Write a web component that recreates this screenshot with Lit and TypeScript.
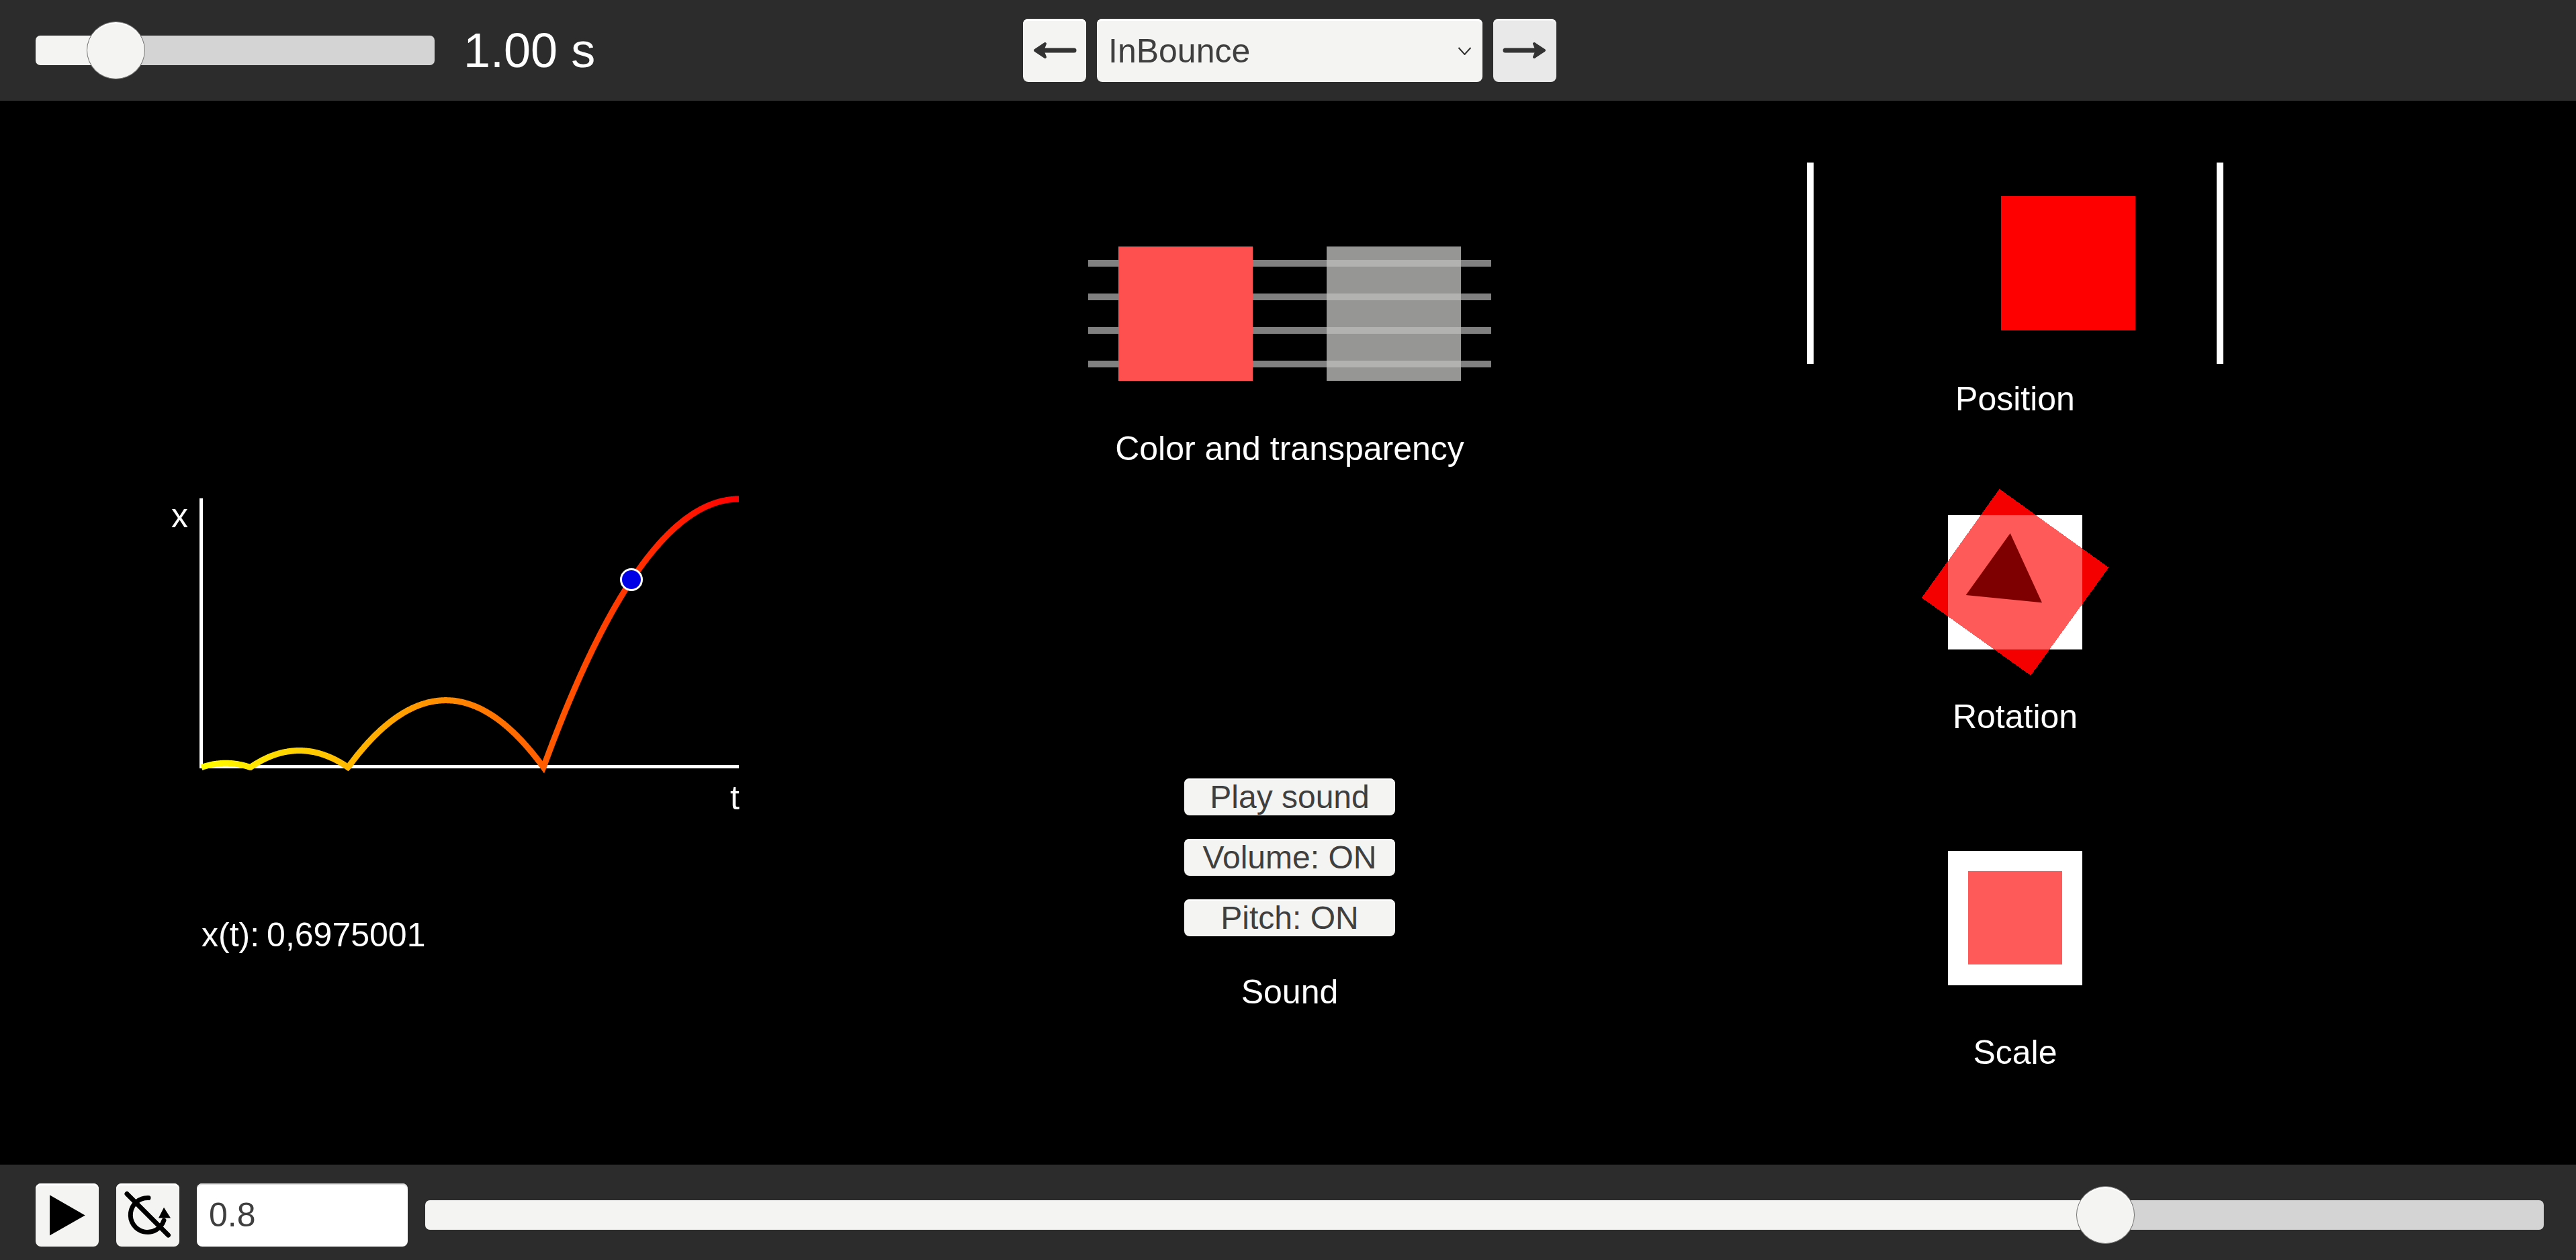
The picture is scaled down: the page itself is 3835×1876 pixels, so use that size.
import { LitElement, html, css, svg } from "lit";
import { customElement } from "lit/decorators.js";

const outBounce = (t: number) => {
  const n = 7.5625, d = 2.75;
  if (t < 1 / d) return n * t * t;
  if (t < 2 / d) return n * (t -= 1.5 / d) * t + 0.75;
  if (t < 2.5 / d) return n * (t -= 2.25 / d) * t + 0.9375;
  return n * (t -= 2.625 / d) * t + 0.984375;
};
const inBounce = (t: number) => 1 - outBounce(1 - t);

// Chart coordinates are local to the 900x530 svg placed at (220, 700).
const X0 = 80, W = 800, Y0 = 442.5, H = 399.5;
const curve = Array.from({ length: 801 }, (_, i) => {
  const t = i / 800;
  return `${(X0 + t * W).toFixed(1)},${(Y0 - inBounce(t) * H).toFixed(1)}`;
}).join(" ");

const arrow = (flip: boolean) => html`<svg class="icon" viewBox="0 0 94 94">
  <g transform=${flip ? "translate(94 0) scale(-1 1)" : ""} fill="#333" stroke="#333" stroke-linecap="round" stroke-linejoin="round">
    <path stroke-width="4" d="M33 37 L18 47 L33 57 L29 47 Z" />
    <path stroke-width="7" d="M29 47 H76" />
  </g>
</svg>`;

@customElement("app-root")
export class AppRoot extends LitElement {
  static styles = css`
    :host {
      display: flex;
      flex-direction: column;
      width: 3835px;
      height: 1876px;
      background: #000;
      color: #fff;
      font-family: "Liberation Sans", Arial, sans-serif;
      font-size: 50px;
      overflow: hidden;
    }
    .top {
      height: 150px;
      flex: none;
      background: #2c2c2c;
      display: flex;
      align-items: center;
      padding-left: 53px;
    }
    .duration {
      width: 1470px;
      display: flex;
      align-items: center;
      gap: 43px;
    }
    .time { font-size: 72px; line-height: 80px; }
    .nav { display: flex; gap: 16px; align-items: center; }
    .bottom {
      height: 142px;
      flex: none;
      background: #2c2c2c;
      display: flex;
      align-items: center;
      gap: 26px;
      padding: 8px 48px 0 53px;
      box-sizing: border-box;
      margin-top: auto;
    }
    input[type="range"] {
      -webkit-appearance: none;
      appearance: none;
      display: block;
      height: 44px;
      margin: 0;
      padding: 0;
      border-radius: 7px;
      outline: none;
      background: linear-gradient(to right, #f4f4f2 var(--fill), #d4d4d4 var(--fill));
    }
    input[type="range"]::-webkit-slider-thumb {
      -webkit-appearance: none;
      width: 87px;
      height: 86px;
      box-sizing: border-box;
      border-radius: 50%;
      border: 1px solid #777;
      background: #f4f4f2;
      box-shadow: inset 0 2px 0 #fff;
    }
    .short { width: 594px; }
    .long { flex: 1; min-width: 0; }
    .btn {
      width: 94px;
      height: 94px;
      flex: none;
      box-sizing: border-box;
      padding: 0;
      border: none;
      border-radius: 8px;
      background: #f4f4f2;
      box-shadow: inset 0 3px 0 #fff;
      display: block;
    }
    .btn.hover { background: #e9e9e9; box-shadow: inset 0 3px 0 #f4f4f4; }
    .icon { display: block; width: 94px; height: 94px; }
    .select-wrap { position: relative; width: 574px; height: 94px; }
    select {
      -webkit-appearance: none;
      appearance: none;
      width: 100%;
      height: 100%;
      box-sizing: border-box;
      border: none;
      border-radius: 8px;
      background: #f4f4f2;
      box-shadow: inset 0 3px 0 #fff;
      color: #3f3f3f;
      font: 50px "Liberation Sans", Arial, sans-serif;
      padding: 2px 0 0 17px;
      outline: none;
    }
    .chev { position: absolute; left: 537px; top: 42px; width: 21px; height: 12px; pointer-events: none; }
    .num {
      width: 314px;
      height: 94px;
      flex: none;
      box-sizing: border-box;
      border: none;
      border-radius: 8px;
      background: #fff;
      box-shadow: inset 0 2px 1px #ddd;
      color: #3f3f3f;
      font: 50px "Liberation Sans", Arial, sans-serif;
      padding: 0 0 0 18px;
      outline: none;
    }
    .main { flex: 1; display: flex; min-height: 0; }
    .col { display: flex; flex-direction: column; align-items: center; flex: none; }
    .left { width: 1240px; padding-top: 550px; box-sizing: border-box; align-items: flex-start; padding-left: 220px; }
    .mid { width: 1360px; padding-top: 217px; box-sizing: border-box; }
    .right { width: 800px; padding-top: 92px; box-sizing: border-box; }
    .chart { display: block; width: 900px; height: 530px; }
    .chart text { font: 50px "Liberation Sans", Arial, sans-serif; fill: #fff; }
    .readout { margin: 132px 0 0 80px; line-height: 60px; display: flex; gap: 11px; }
    .label { line-height: 60px; height: 60px; text-align: center; white-space: nowrap; }
    .mt70 { margin-top: 70px; }
    .transparency { position: relative; width: 600px; height: 200px; display: flex; }
    .stripes {
      position: absolute;
      inset: 20px 0 auto 0;
      height: 160px;
      display: flex;
      flex-direction: column;
      justify-content: space-between;
    }
    .stripes i { display: block; height: 10px; background: #808080; }
    .sq { width: 200px; height: 200px; position: relative; flex: none; }
    .sq.red { margin-left: 45px; background: #ff5050; }
    .sq.ghost { margin-left: 110px; background: rgba(192, 192, 190, 0.78); }
    .sound {
      margin-top: 461px;
      display: flex;
      flex-direction: column;
      gap: 35px;
    }
    .sbtn {
      width: 314px;
      height: 55px;
      box-sizing: border-box;
      padding: 0;
      border: none;
      border-radius: 8px;
      background: #f4f4f2;
      box-shadow: inset 0 2px 0 #fff;
      color: #3f3f3f;
      font: 48px/55px "Liberation Sans", Arial, sans-serif;
      text-align: center;
    }
    .position {
      width: 620px;
      height: 300px;
      box-sizing: border-box;
      border-left: 10px solid #fff;
      border-right: 10px solid #fff;
      padding: 50px 0 0 279px;
    }
    .position div { width: 200px; height: 200px; background: #f00; }
    .rot { display: block; width: 300px; height: 300px; margin: 93px 0 -50px; }
    .scale {
      width: 200px;
      height: 200px;
      margin-top: 170px;
      background: #fff;
      box-sizing: border-box;
      padding: 30px;
    }
    .scale div { width: 140px; height: 139px; background: #ff5a5a; }
  `;

  render() {
    return html`
      <div class="top">
        <div class="duration">
          <input class="short" type="range" min="0" max="1" step="any" .value=${"0.149"} style="--fill:119px" />
          <span class="time">1.00 s</span>
        </div>
        <div class="nav">
          <button class="btn">${arrow(false)}</button>
          <div class="select-wrap">
            <select><option>InBounce</option></select>
            <svg class="chev" viewBox="0 0 21 12"><path d="M1.5 1 L10.5 11 L19.5 1" fill="none" stroke="#333" stroke-width="2" /></svg>
          </div>
          <button class="btn hover">${arrow(true)}</button>
        </div>
      </div>
      <div class="main">
        <div class="col left">
          <svg class="chart" viewBox="0 0 900 530">
            <defs>
              <linearGradient id="heat" gradientUnits="userSpaceOnUse" x1=${X0} y1="0" x2=${X0 + W} y2="0">
                <stop offset="0" stop-color="#ffff00" />
                <stop offset="1" stop-color="#ff0000" />
              </linearGradient>
            </defs>
            <rect x="77" y="42" width="5" height="402" fill="#fff" />
            <rect x="77" y="439" width="803" height="5" fill="#fff" />
            <polyline points=${curve} fill="none" stroke="url(#heat)" stroke-width="9" />
            <circle cx="720" cy="163" r="15.5" fill="#0000e6" stroke="#fff" stroke-width="3" />
            <text x="35" y="85">x</text>
            <text x="867" y="505">t</text>
          </svg>
          <div class="readout"><span>x(t):</span><span>0,6975001</span></div>
        </div>
        <div class="col mid">
          <div class="transparency">
            <div class="stripes"><i></i><i></i><i></i><i></i></div>
            <div class="sq red"></div>
            <div class="sq ghost"></div>
          </div>
          <div class="label" style="margin-top:71px">Color and transparency</div>
          <div class="sound">
            <button class="sbtn">Play sound</button>
            <button class="sbtn">Volume: ON</button>
            <button class="sbtn">Pitch: ON</button>
          </div>
          <div class="label" style="margin-top:53px">Sound</div>
        </div>
        <div class="col right">
          <div class="position"><div></div></div>
          <div class="label" style="margin-top:22px">Position</div>
          <svg class="rot" viewBox="0 0 300 300">
            <defs>
              <clipPath id="over"><rect x="50" y="50" width="200" height="200" /></clipPath>
            </defs>
            <rect x="50" y="50" width="200" height="200" fill="#fff" />
            ${svg`<polygon points="126.7,11 289.3,128 173.3,288.7 11,173" fill="#f50000" shape-rendering="crispEdges" />
            <polygon points="126.7,11 289.3,128 173.3,288.7 11,173" fill="#ff5a5a" clip-path="url(#over)" shape-rendering="crispEdges" />
            <polygon points="142.7,77 190,180.3 76.7,169" fill="#7f0000" />`}
          </svg>
          <div class="label mt70">Rotation</div>
          <div class="scale"><div></div></div>
          <div class="label mt70">Scale</div>
        </div>
      </div>
      <div class="bottom">
        <button class="btn">
          <svg class="icon" viewBox="0 0 94 94"><path d="M21 17.3 L73.7 47.5 L21 77.5 Z" fill="#000" /></svg>
        </button>
        <button class="btn">
          <svg class="icon" viewBox="0 0 94 94">
            <path d="M48 21.5 A25.5 25.5 0 1 0 71 55" fill="none" stroke="#000" stroke-width="7" stroke-linecap="round" />
            <path d="M16 15.5 L77.5 77" fill="none" stroke="#000" stroke-width="7" stroke-linecap="round" />
            <path d="M71 35.7 L81 51.5 H63 Z" fill="#000" />
          </svg>
        </button>
        <input class="num" type="text" .value=${"0.8"} />
        <input class="long" type="range" min="0" max="1" step="any" .value=${"0.8013"} style="--fill:2501px" />
      </div>
    `;
  }
}
